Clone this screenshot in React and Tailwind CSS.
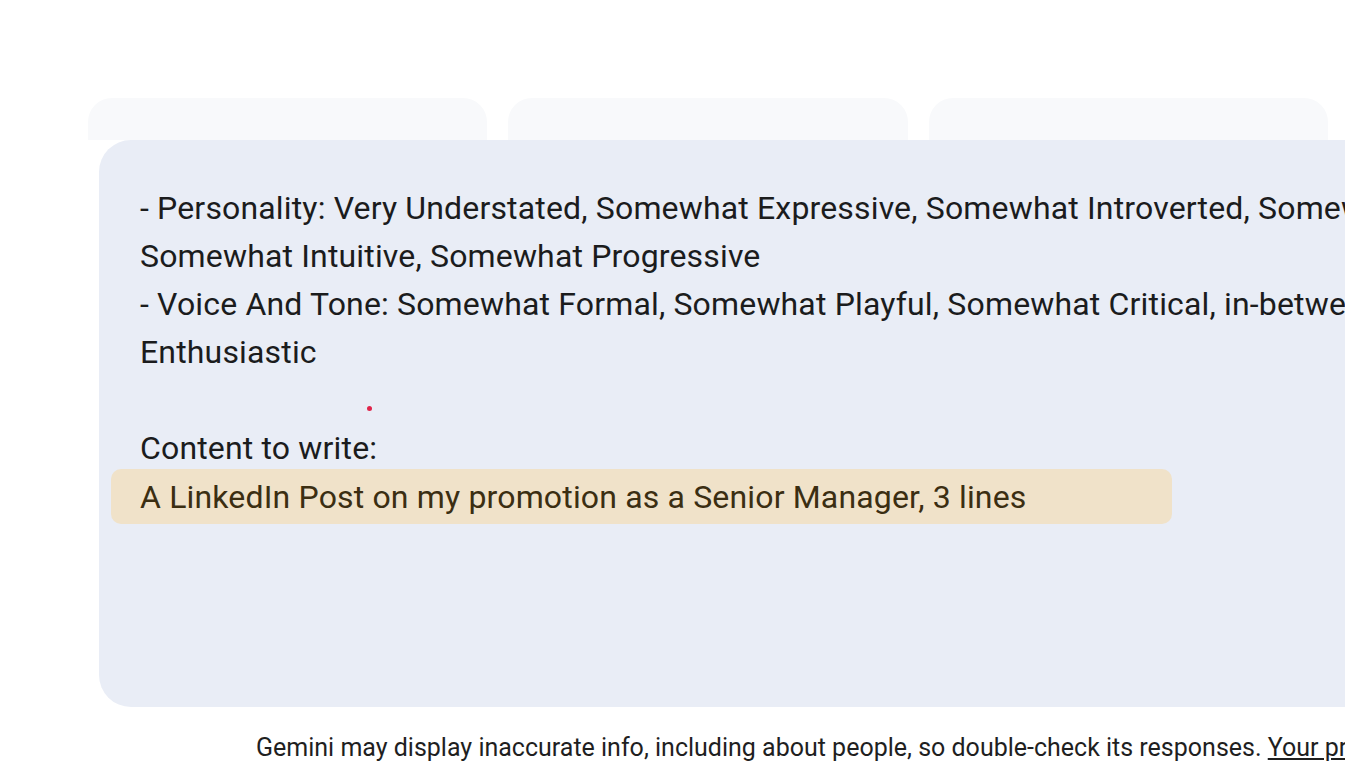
export default function App() {
  const font = { fontFamily: 'Roboto, "Noto Sans", sans-serif' }
  return (
    <div className="w-[1345px] h-[771px] overflow-hidden bg-white text-[#1b1c1d]" style={font}>
      {/* suggestion cards peeking behind the prompt */}
      <div className="flex gap-[21px] pt-[98px] pl-[88px] h-[140px]">
        <div className="w-[399px] shrink-0 rounded-t-[24px] bg-[#f8f9fb]" />
        <div className="w-[400px] shrink-0 rounded-t-[24px] bg-[#f8f9fb]" />
        <div className="w-[399px] shrink-0 rounded-t-[24px] bg-[#f8f9fb]" />
      </div>

      {/* prompt card */}
      <div className="relative ml-[99px] w-[1420px] h-[567px] rounded-[32px] bg-[#e9edf6] pt-[44px] pl-[41px] text-[32px] leading-[48px] tracking-[0.16px] whitespace-nowrap">
        <div>- Personality: Very Understated, Somewhat Expressive, Somewhat Introverted, Somewhat Analytical,</div>
        <div>Somewhat Intuitive, Somewhat Progressive</div>
        <div>- Voice And Tone: Somewhat Formal, Somewhat Playful, Somewhat Critical, in-between Reserved and</div>
        <div>Enthusiastic</div>
        <div className="h-[48px]" />
        <div>Content to write:</div>
        <div className="-mt-[3px] -ml-[29px] pl-[29px] w-[1061px] h-[55px] flex items-center rounded-[10px] bg-[#f0e2c9] text-[#3b2e12]">
          A LinkedIn Post on my promotion as a Senior Manager, 3 lines
        </div>
        <span className="absolute left-[268px] top-[266px] w-[5px] h-[5px] rounded-full bg-[#e0244a]" />
      </div>

      <div className="pl-[256px] pt-[26px] text-[25px] leading-[30px] text-[#1f1f1f] whitespace-nowrap">
        Gemini may display inaccurate info, including about people, so double-check its responses.{' '}
        <span className="underline">Your privacy and Gemini Apps</span>
      </div>
    </div>
  )
}
